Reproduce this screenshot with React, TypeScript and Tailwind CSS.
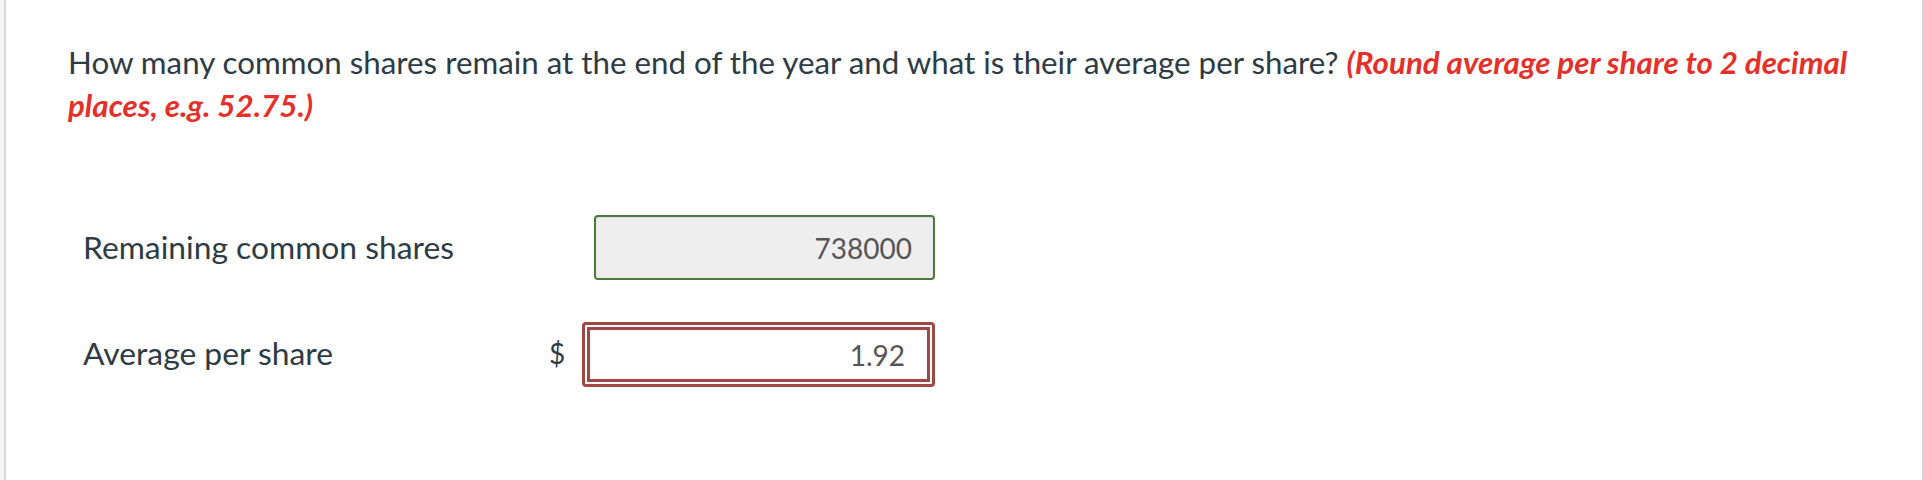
import React from 'react';

const lato = { fontFamily: 'Lato, "Open Sans", sans-serif' };

export default function App() {
  return (
    <div className="flex h-[480px] w-full bg-[#f5f5f5]" style={lato}>
      <div className="w-[4px] shrink-0" />
      <main className="flex-1 border-x-2 border-[#d9d9d9] bg-white pt-[41px] pl-[62px] pr-[40px]">
        <p className="text-[31.3px] leading-[43px] text-[#2d3b45]">
          How many common shares remain at the end of the year and what is their average per share?{' '}
          <span className="font-bold italic text-[#e5302a]">
            (Round average per share to 2 decimal places, e.g. 52.75.)
          </span>
        </p>

        <div className="mt-[88px] pl-[15px] text-[31.8px] text-[#2d3b45]">
          <div className="flex items-center">
            <span className="w-[511px] shrink-0">Remaining common shares</span>
            <input
              readOnly
              value="738000"
              className="h-[65px] w-[341px] rounded-[4px] border-2 border-[#4a7b3d] bg-[#eeeeee] pr-[21px] text-right text-[28px] text-[#555555] shadow-[inset_0_1px_2px_rgba(0,0,0,0.08)] outline-none"
              style={lato}
            />
          </div>

          <div className="mt-[42px] flex items-start">
            <span className="mt-[14px] w-[466px] shrink-0 leading-[34px]">Average per share</span>
            <span className="mt-[14px] w-[33px] shrink-0 text-[28px] leading-[34px]">$</span>
            <div className="h-[65px] w-[353px] rounded-[4px] border-[3px] border-[#a04844] bg-white p-[2px]">
              <input
                readOnly
                value="1.92"
                className="h-full w-full border-[3px] border-[#a04844] bg-white pr-[22px] text-right text-[28px] text-[#555555] shadow-[inset_0_1px_2px_rgba(0,0,0,0.06)] outline-none"
                style={lato}
              />
            </div>
          </div>
        </div>
      </main>
    </div>
  );
}
